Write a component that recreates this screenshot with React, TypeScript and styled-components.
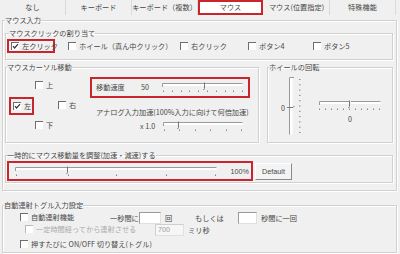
import styled, { createGlobalStyle, css } from 'styled-components'

const GlobalStyle = createGlobalStyle`
  html, body { margin: 0; padding: 0; background: #f0f0f0; }
`

const RED = '#c8262c'
const TEXT = '#474747'

const Page = styled.div`
  width: 400px;
  height: 254px;
  overflow: hidden;
  background: #f0f0f0;
  color: ${TEXT};
  font-family: 'Noto Sans CJK JP', 'Liberation Sans', sans-serif;
  font-size: 7.2px;
  line-height: 9px;
`

const TabBar = styled.div`
  display: flex;
  height: 15px;
  margin-bottom: 1px;
`

const Tab = styled.div<{ $active?: boolean }>`
  width: 66px;
  box-sizing: border-box;
  display: flex;
  align-items: center;
  justify-content: center;
  border-right: 1px solid #dadada;
  color: ${TEXT};
  ${(p) =>
    p.$active &&
    css`
      border: 2px solid ${RED};
      background: #fff;
      width: 65px;
      margin-right: 1px;
    `}
`

const Group = styled.fieldset<{ $pad?: string; $mt?: number }>`
  margin: ${(p) => p.$mt ?? 0}px 0 0 0;
  padding: ${(p) => p.$pad ?? '0'};
  border: 1px solid #d0d0d0;
  box-shadow: inset 1px 1px 0 #fff, 1px 1px 0 #fff;
  min-width: 0;
  box-sizing: border-box;
`

const Legend = styled.legend<{ $ml?: number }>`
  padding: 0;
  margin-left: ${(p) => p.$ml ?? 0}px;
  font-size: 7.2px;
  line-height: 9px;
  color: ${TEXT};
`

const MainGroup = styled(Group)`
  margin: 0 3px 0 2px;
  height: 175px;
`

const ClickRow = styled.div`
  display: grid;
  grid-template-columns: 61px 112px 68px 65px auto;
  align-items: center;
  height: 14px;
  margin-top: 1.5px;
`

const Highlight = styled.div<{ $w: number; $h: number }>`
  width: ${(p) => p.$w}px;
  height: ${(p) => p.$h}px;
  box-sizing: border-box;
  border: 2px solid ${RED};
  display: flex;
  align-items: center;
`

const Check = styled.label<{ $disabled?: boolean }>`
  display: inline-flex;
  align-items: center;
  gap: 3px;
  white-space: nowrap;
  color: ${(p) => (p.$disabled ? '#ababab' : TEXT)};
`

const Box = styled.span<{ $disabled?: boolean }>`
  position: relative;
  display: inline-block;
  width: 8px;
  height: 8px;
  box-sizing: border-box;
  border-top: 1px solid ${(p) => (p.$disabled ? '#b8b8b8' : '#6e6e6e')};
  border-left: 1px solid ${(p) => (p.$disabled ? '#b8b8b8' : '#6e6e6e')};
  background: #fff;
  & > svg {
    position: absolute;
    left: 0;
    top: 0;
  }
`

const CheckBox = ({
  label,
  checked,
  disabled,
}: {
  label: string
  checked?: boolean
  disabled?: boolean
}) => (
  <Check $disabled={disabled}>
    <Box $disabled={disabled}>
      {checked && (
        <svg width='7' height='7' viewBox='0 0 7 7'>
          <path d='M1 3.2 L2.6 5 L6 1.2' stroke='#333' strokeWidth='1.2' fill='none' />
        </svg>
      )}
    </Box>
    {label}
  </Check>
)

const MiddleRow = styled.div`
  display: flex;
  gap: 8px;
  margin-top: 3px;
  margin-right: 3px;
`

const CursorGroup = styled(Group)`
  width: 254px;
  height: 80px;
  padding: 1.5px 0 0 3px;
  display: grid;
  grid-template-columns: 81px 160px;
  align-items: start;
`

const DirPad = styled.div`
  display: grid;
  grid-template-columns: 26px 23px auto;
  grid-template-rows: 20px 20px 20px;
  align-items: center;
  padding-top: 2.5px;
`

const Cell = styled.div<{ $col: number; $row: number }>`
  grid-column: ${(p) => p.$col};
  grid-row: ${(p) => p.$row};
`

const SpeedCol = styled.div`
  display: flex;
  flex-direction: column;
  padding-top: 3.5px;
`

const Field = styled.span<{ $w: number; $ml?: number }>`
  display: inline-block;
  width: ${(p) => p.$w}px;
  margin-left: ${(p) => p.$ml ?? 0}px;
  white-space: nowrap;
`

const AnalogLabel = styled.div`
  margin: 10px 0 0 6px;
  white-space: nowrap;
`

const AnalogRow = styled.div`
  display: flex;
  align-items: center;
  margin-top: 4px;
`

const WheelGroup = styled(Group)`
  flex: 1;
  height: 80px;
  padding: 5px 0 0 13px;
  display: flex;
  align-items: flex-start;
`

const WheelValue = styled.span`
  margin-top: 27px;
  width: 5px;
`

const WheelH = styled.div`
  margin: 23px 0 0 17px;
  display: flex;
  flex-direction: column;
  align-items: center;
  gap: 4px;
`

const AdjustGroup = styled(Group)`
  margin: 8px 3px 0 0;
  height: 32px;
  padding: 0 0 0 1px;
  display: flex;
  align-items: center;
  gap: 2px;
`

const AdjustBox = styled(Highlight)`
  padding: 0 2px 0 6px;
  justify-content: space-between;
`

const Percent = styled.span`
  font-family: 'Liberation Sans', sans-serif;
`

const Button = styled.button`
  width: 37px;
  height: 17px;
  padding: 0;
  box-sizing: border-box;
  font-family: 'Liberation Sans', sans-serif;
  font-size: 7.2px;
  color: ${TEXT};
  background: #f4f4f4;
  border: 1px solid #fff;
  border-right-color: #8a8a8a;
  border-bottom-color: #8a8a8a;
  margin-top: 1px;
`

const AutoGroup = styled(Group)`
  margin: 10px 3px 0 2px;
  height: 52px;
  padding: 0 0 0 17px;
`

const AutoRow = styled.div<{ $mt?: number }>`
  display: flex;
  align-items: center;
  height: 12px;
  margin-top: ${(p) => p.$mt ?? 0}px;
`

const TextBox = styled.span<{ $w: number; $disabled?: boolean }>`
  display: inline-block;
  width: ${(p) => p.$w}px;
  height: 12px;
  box-sizing: border-box;
  background: ${(p) => (p.$disabled ? '#f6f6f6' : '#fff')};
  border: 1px solid ${(p) => (p.$disabled ? '#cfcfcf' : '#9a9a9a')};
  border-right-color: #e0e0e0;
  border-bottom-color: #e0e0e0;
  font-family: 'Liberation Sans', sans-serif;
  color: #a0a0a0;
  padding-left: 2px;
  line-height: 10px;
`

const HSlider = ({
  width,
  thumb,
  ticks,
  split,
}: {
  width: number
  thumb: number
  ticks: number[]
  split?: boolean
}) => (
  <svg width={width} height={11} viewBox={`0 0 ${width} 11`} style={{ display: 'block' }}>
    <rect x='0.5' y='1.5' width={width - 1} height='2.5' fill='#fff' />
    <path d={`M0.5 5 V1.5 H${width - 0.5}`} stroke='#9a9a9a' fill='none' />
    {split && <rect x={thumb - 1} y='0' width='2' height='4' fill='#f0f0f0' />}
    <path d={`M${thumb - 0.5} 0.5 V6.5 L${thumb - 1.5} 8`} stroke='#777' fill='none' />
    {ticks.map((t) => (
      <rect key={t} x={t} y='8.5' width='1' height='1.5' fill='#888' />
    ))}
  </svg>
)

const VSlider = () => (
  <svg width='16' height='58' viewBox='0 0 16 58' style={{ display: 'block' }}>
    <rect x='3.5' y='0.5' width='3' height='57' fill='#fff' />
    <path d='M8 0.5 H3.5 V57.5' stroke='#9a9a9a' fill='none' />
    <path d='M1 30.5 H7 L8.5 29' stroke='#777' fill='none' />
    {Array.from({ length: 11 }, (_, i) => (
      <rect key={i} x='13' y={2 + i * 5.3} width='1.5' height='1' fill='#888' />
    ))}
  </svg>
)

const range = (n: number, step: number, start = 0) =>
  Array.from({ length: n }, (_, i) => Math.round(start + i * step))

const App = () => {
  const tabs = ['なし', 'キーボード', 'キーボード（複数）', 'マウス', 'マウス(位置指定)', '特殊機能']
  return (
    <Page>
      <GlobalStyle />
      <TabBar>
        {tabs.map((t) => (
          <Tab key={t} $active={t === 'マウス'}>
            {t}
          </Tab>
        ))}
      </TabBar>

      <MainGroup $pad='3.5px 0 0 2px'>
        <Legend>マウス入力</Legend>

        <Group $pad='0 0 6px 1px' style={{ marginRight: 3 }}>
          <Legend $ml={2}>マウスクリックの割り当て</Legend>
          <ClickRow>
            <Highlight $w={48} $h={14} style={{ paddingLeft: 2 }}>
              <CheckBox label='左クリック' checked />
            </Highlight>
            <CheckBox label='ホイール（真ん中クリック）' />
            <CheckBox label='右クリック' />
            <CheckBox label='ボタン4' />
            <CheckBox label='ボタン5' />
          </ClickRow>
        </Group>

        <MiddleRow>
          <CursorGroup>
            <Legend $ml={-2}>マウスカーソル移動</Legend>
            <DirPad>
              <Cell $col={2} $row={1}>
                <CheckBox label='上' />
              </Cell>
              <Cell $col={1} $row={2}>
                <Highlight $w={25} $h={18} style={{ paddingLeft: 2 }}>
                  <CheckBox label='左' checked />
                </Highlight>
              </Cell>
              <Cell $col={3} $row={2}>
                <CheckBox label='右' />
              </Cell>
              <Cell $col={2} $row={3}>
                <CheckBox label='下' />
              </Cell>
            </DirPad>
            <SpeedCol>
              <Highlight $w={160} $h={21} style={{ paddingLeft: 4 }}>
                <Field $w={45}>移動速度</Field>
                <Field $w={21}>50</Field>
                <HSlider width={81} thumb={43} ticks={range(10, 8.8, 1)} />
              </Highlight>
              <AnalogLabel>アナログ入力加速(100%入力に向けて何倍加速)</AnalogLabel>
              <AnalogRow>
                <Field $w={23} $ml={50}>
                  x 1.0
                </Field>
                <HSlider width={80} thumb={16} ticks={range(6, 15.4, 1)} />
              </AnalogRow>
            </SpeedCol>
          </CursorGroup>

          <WheelGroup>
            <Legend $ml={-12}>ホイールの回転</Legend>
            <WheelValue>0</WheelValue>
            <VSlider />
            <WheelH>
              <HSlider width={62} thumb={31} ticks={range(11, 6, 0)} split />
              <span>0</span>
            </WheelH>
          </WheelGroup>
        </MiddleRow>

        <AdjustGroup>
          <Legend>一時的にマウス移動量を調整(加速・減速)する</Legend>
          <AdjustBox $w={246} $h={20}>
            <HSlider width={202} thumb={53} ticks={[1, 53, 101, 151, 200]} />
            <Percent>100%</Percent>
          </AdjustBox>
          <Button>Default</Button>
        </AdjustGroup>
      </MainGroup>

      <AutoGroup>
        <Legend $ml={-16}>自動連射トグル入力設定</Legend>
        <AutoRow $mt={2}>
          <Field $w={90}>
            <CheckBox label='自動連射機能' />
          </Field>
          <Field $w={29}>一秒間に</Field>
          <TextBox $w={22} />
          <Field $w={30} $ml={4}>
            回
          </Field>
          <Field $w={43}>もしくは</Field>
          <TextBox $w={19} />
          <Field $w={40} $ml={4}>
            秒間に一回
          </Field>
        </AutoRow>
        <AutoRow>
          <Field $w={130} $ml={5}>
            <CheckBox label='一定時間経ってから連射させる' disabled />
          </Field>
          <TextBox $w={29} $disabled>
            700
          </TextBox>
          <Field $w={20} $ml={4}>
            ミリ秒
          </Field>
        </AutoRow>
        <AutoRow $mt={2}>
          <CheckBox label='押すたびに ON/OFF 切り替え(トグル)' />
        </AutoRow>
      </AutoGroup>
    </Page>
  )
}

export default App
